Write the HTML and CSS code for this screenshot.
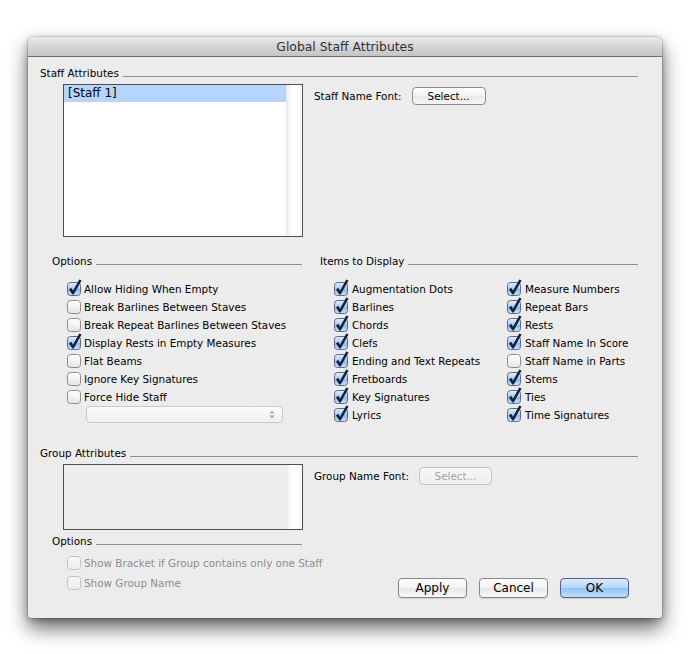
FILE: index.html
```html
<!DOCTYPE html>
<html>
<head>
<meta charset="utf-8">
<title>Global Staff Attributes</title>
<link rel="stylesheet" href="styles.css">
</head>
<body>
<svg class="defs" width="0" height="0" aria-hidden="true">
  <defs>
    <linearGradient id="gOff" x1="0" y1="0" x2="0" y2="1">
      <stop offset="0" stop-color="#ffffff"/>
      <stop offset="0.5" stop-color="#f3f3f3"/>
      <stop offset="1" stop-color="#e2e2e2"/>
    </linearGradient>
    <linearGradient id="gOn" x1="0" y1="0" x2="0" y2="1">
      <stop offset="0" stop-color="#e6f0fc"/>
      <stop offset="0.5" stop-color="#a6c8ef"/>
      <stop offset="0.55" stop-color="#8bb8eb"/>
      <stop offset="1" stop-color="#cfe6fc"/>
    </linearGradient>
    <linearGradient id="gDis" x1="0" y1="0" x2="0" y2="1">
      <stop offset="0" stop-color="#f7f7f7"/>
      <stop offset="1" stop-color="#ececec"/>
    </linearGradient>
    <symbol id="cbOff" viewBox="0 0 14 14"><rect x="0.5" y="0.5" width="13" height="13" rx="3" fill="url(#gOff)" stroke="#8c8c8c"/></symbol>
    <symbol id="cbOn" viewBox="0 0 14 14" overflow="visible"><rect x="0.5" y="0.5" width="13" height="13" rx="3" fill="url(#gOn)" stroke="#5a6a8a"/><polygon points="2,7.4 4.2,5.8 6,8.8 12.2,-2.6 14.6,-1.4 6.7,12.4 5.3,12.4" fill="#16223c"/></symbol>
    <symbol id="cbDis" viewBox="0 0 14 14"><rect x="0.5" y="0.5" width="13" height="13" rx="3" fill="url(#gDis)" stroke="#c2c2c2"/></symbol>
  </defs>
</svg>

<div class="window">
  <div class="titlebar">Global Staff Attributes</div>
  <div class="content">
    <div class="head staff-head"><span>Staff Attributes</span></div>
    <div class="attr-row">
      <div class="listbox">
        <div class="list-items"><div class="list-row sel">[Staff 1]</div></div>
        <div class="scroll"></div>
      </div>
      <div class="font-field">
        <span>Staff Name Font:</span>
        <div class="btn-small">Select...</div>
      </div>
    </div>

    <div class="cols">
      <div class="col-left">
        <div class="head"><span>Options</span></div>
        <div class="checks">
          <div class="check"><svg class="cb"><use href="#cbOn"/></svg><span>Allow Hiding When Empty</span></div>
          <div class="check"><svg class="cb"><use href="#cbOff"/></svg><span>Break Barlines Between Staves</span></div>
          <div class="check"><svg class="cb"><use href="#cbOff"/></svg><span>Break Repeat Barlines Between Staves</span></div>
          <div class="check"><svg class="cb"><use href="#cbOn"/></svg><span>Display Rests in Empty Measures</span></div>
          <div class="check"><svg class="cb"><use href="#cbOff"/></svg><span>Flat Beams</span></div>
          <div class="check"><svg class="cb"><use href="#cbOff"/></svg><span>Ignore Key Signatures</span></div>
          <div class="check"><svg class="cb"><use href="#cbOff"/></svg><span>Force Hide Staff</span></div>
        </div>
        <div class="popup">
          <svg class="popup-arrows" width="6" height="9" viewBox="0 0 6 9"><path d="M0.5 3.5 L3 0.5 L5.5 3.5 Z M0.5 5.5 L3 8.5 L5.5 5.5 Z" fill="#a8a8a8"/></svg>
        </div>
      </div>
      <div class="col-right">
        <div class="head"><span>Items to Display</span></div>
        <div class="items">
          <div class="check"><svg class="cb"><use href="#cbOn"/></svg><span>Augmentation Dots</span></div>
          <div class="check"><svg class="cb"><use href="#cbOn"/></svg><span>Barlines</span></div>
          <div class="check"><svg class="cb"><use href="#cbOn"/></svg><span>Chords</span></div>
          <div class="check"><svg class="cb"><use href="#cbOn"/></svg><span>Clefs</span></div>
          <div class="check"><svg class="cb"><use href="#cbOn"/></svg><span>Ending and Text Repeats</span></div>
          <div class="check"><svg class="cb"><use href="#cbOn"/></svg><span>Fretboards</span></div>
          <div class="check"><svg class="cb"><use href="#cbOn"/></svg><span>Key Signatures</span></div>
          <div class="check"><svg class="cb"><use href="#cbOn"/></svg><span>Lyrics</span></div>
          <div class="check"><svg class="cb"><use href="#cbOn"/></svg><span>Measure Numbers</span></div>
          <div class="check"><svg class="cb"><use href="#cbOn"/></svg><span>Repeat Bars</span></div>
          <div class="check"><svg class="cb"><use href="#cbOn"/></svg><span>Rests</span></div>
          <div class="check"><svg class="cb"><use href="#cbOn"/></svg><span>Staff Name In Score</span></div>
          <div class="check"><svg class="cb"><use href="#cbOff"/></svg><span>Staff Name in Parts</span></div>
          <div class="check"><svg class="cb"><use href="#cbOn"/></svg><span>Stems</span></div>
          <div class="check"><svg class="cb"><use href="#cbOn"/></svg><span>Ties</span></div>
          <div class="check"><svg class="cb"><use href="#cbOn"/></svg><span>Time Signatures</span></div>
        </div>
      </div>
    </div>

    <div class="head group-head"><span>Group Attributes</span></div>
    <div class="attr-row">
      <div class="listbox group-list">
        <div class="list-items"></div>
        <div class="scroll"></div>
      </div>
      <div class="font-field">
        <span>Group Name Font:</span>
        <div class="btn-small disabled">Select...</div>
      </div>
    </div>

    <div class="bottom">
      <div class="bottom-left">
        <div class="head"><span>Options</span></div>
        <div class="checks dis-checks">
          <div class="check disabled"><svg class="cb"><use href="#cbDis"/></svg><span>Show Bracket if Group contains only one Staff</span></div>
          <div class="check disabled"><svg class="cb"><use href="#cbDis"/></svg><span>Show Group Name</span></div>
        </div>
      </div>
      <div class="buttons">
        <div class="btn">Apply</div>
        <div class="btn">Cancel</div>
        <div class="btn default">OK</div>
      </div>
    </div>
  </div>
</div>
</body>
</html>
```

FILE: styles.css
```css
html, body {
  margin: 0;
  padding: 0;
  background: #ffffff;
}
body {
  font-family: "DejaVu Sans", "Liberation Sans", sans-serif;
  font-size: 10.4px;
  color: #000;
  width: 690px;
  height: 654px;
  overflow: hidden;
}
.defs {
  display: block;
  width: 0;
  height: 0;
  overflow: hidden;
}
.window {
  margin: 37px 0 0 28px;
  width: 634px;
  height: 581px;
  background: #ececec;
  border-radius: 5px 5px 3px 3px;
  box-shadow: 0 10px 20px rgba(0, 0, 0, 0.6), 0 2px 6px rgba(0, 0, 0, 0.25), 0 0 0 1px rgba(0, 0, 0, 0.1);
  overflow: hidden;
}
.titlebar {
  height: 19px;
  line-height: 20px;
  border-bottom: 1px solid #6e6e6e;
  background: linear-gradient(#eaeaea, #d6d6d6 50%, #c4c4c4);
  text-align: center;
  font-size: 12.4px;
  color: #333;
}
.content {
  padding: 0 24px 0 12px;
}
.head {
  display: flex;
  align-items: center;
  height: 14px;
  gap: 4px;
  white-space: nowrap;
}
.head::after {
  content: "";
  flex: 1;
  height: 0;
  border-top: 1px solid #8e8e8e;
  margin-top: 6px;
}
.staff-head {
  margin-top: 9px;
}
.attr-row {
  display: flex;
  margin: 4px 0 0 23px;
}
.listbox {
  box-sizing: border-box;
  width: 240px;
  height: 153px;
  border: 1px solid #4f4f4f;
  background: #fff;
  display: flex;
}
.group-list {
  height: 66px;
  background: #ededed;
}
.list-items {
  flex: 1;
}
.list-row {
  height: 17px;
  line-height: 17px;
  padding-left: 4px;
  font-size: 12px;
}
.list-row.sel {
  background: #b5d5fe;
}
.scroll {
  width: 15px;
  border-left: 1px solid #e6e6e6;
  background: linear-gradient(90deg, #efefef, #ffffff 35%, #f7f7f7);
}
.group-list .scroll {
  background: linear-gradient(90deg, #f2f2f2, #ffffff 40%, #f9f9f9);
}
.font-field {
  display: flex;
  align-items: center;
  gap: 10px;
  height: 18px;
  margin: 3px 0 0 11px;
  white-space: nowrap;
}
.btn-small {
  box-sizing: border-box;
  width: 74px;
  height: 18px;
  line-height: 16px;
  text-align: center;
  border: 1px solid #8a8a8a;
  border-radius: 4px;
  background: linear-gradient(#ffffff, #f4f4f4 50%, #e9e9e9 51%, #f6f6f6);
  font-size: 10.4px;
}
.btn-small.disabled {
  width: 73px;
  color: #a3a3a3;
  border-color: #c4c4c4;
  background: linear-gradient(#f7f7f7, #efefef);
}
.cols {
  display: grid;
  grid-template-columns: 250px 318px;
  column-gap: 18px;
  margin: 17px 0 0 12px;
}
.checks {
  margin-top: 12px;
  padding-left: 15px;
}
.check {
  display: flex;
  align-items: center;
  gap: 3px;
  height: 18px;
  white-space: nowrap;
}
.cb {
  width: 14px;
  height: 14px;
  flex: none;
  overflow: visible;
}
.popup {
  box-sizing: border-box;
  margin-left: 34px;
  width: 197px;
  height: 17px;
  border: 1px solid #c9c9c9;
  border-radius: 4px;
  background: linear-gradient(#fbfbfb, #f0f0f0);
  display: flex;
  justify-content: flex-end;
  align-items: center;
  padding-right: 7px;
}
.items {
  margin-top: 12px;
  padding-left: 14px;
  display: grid;
  grid-template-columns: 173px auto;
  grid-template-rows: repeat(8, 18px);
  grid-auto-flow: column;
}
.items .check {
  gap: 4px;
}
.group-head {
  margin: 22px 0 0 0;
}
.bottom {
  display: flex;
  margin: 4px 0 0 12px;
}
.bottom-left {
  width: 250px;
  flex: none;
}
.dis-checks {
  margin-top: 5px;
}
.dis-checks .check {
  height: 20px;
}
.check.disabled {
  color: #8e8e8e;
}
.buttons {
  flex: 1;
  display: flex;
  justify-content: flex-end;
  align-items: flex-start;
  gap: 12px;
  padding: 44px 9px 0 0;
}
.btn {
  box-sizing: border-box;
  width: 69px;
  height: 20px;
  line-height: 18px;
  text-align: center;
  font-size: 12px;
  border: 1px solid #868686;
  border-radius: 4px;
  background: linear-gradient(#ffffff, #f3f3f3 50%, #e6e6e6 51%, #f8f8f8);
  box-shadow: 0 1px 1px rgba(0, 0, 0, 0.12);
}
.btn.default {
  border-color: #5b5b95;
  background: linear-gradient(#dcecfc, #b3d6f8 50%, #8fc3f4 51%, #bfe0fb);
}
```
